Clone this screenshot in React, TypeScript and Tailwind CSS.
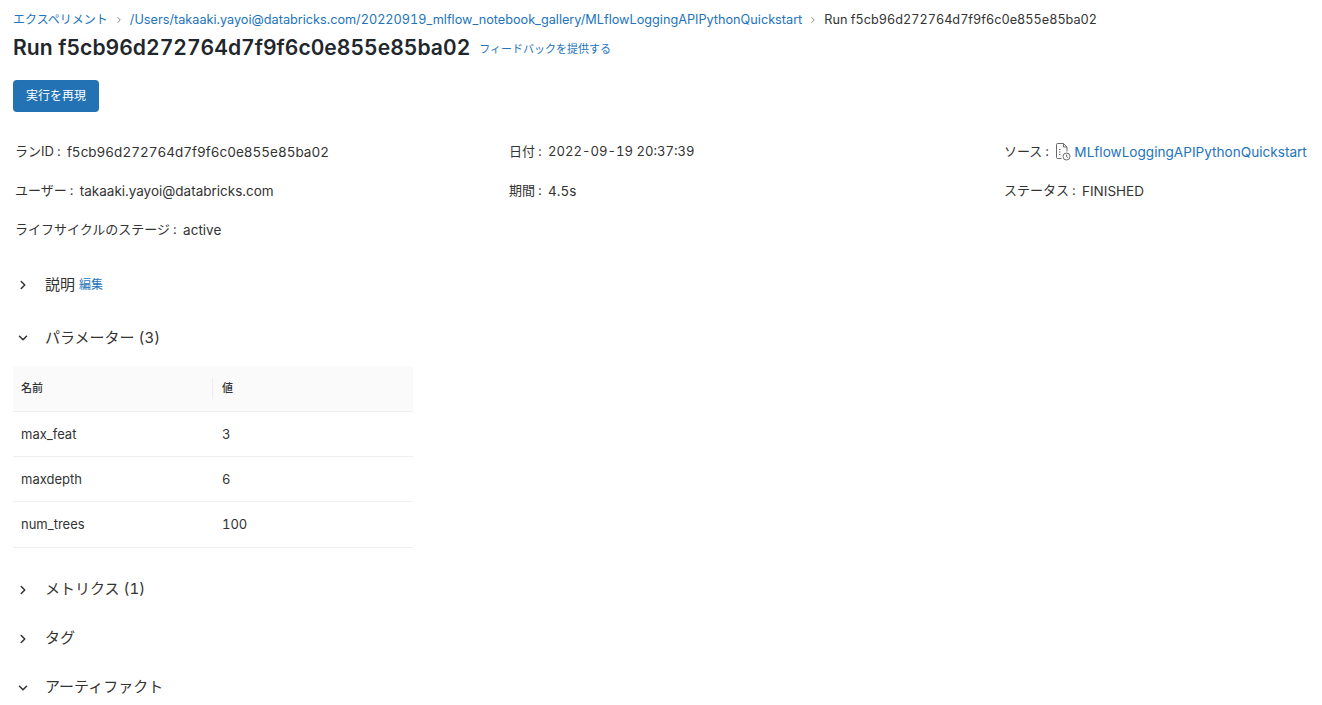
import { ChevronDown, ChevronRight } from 'lucide-react';

const FONT = "font-['Inter','Noto_Sans_CJK_JP',sans-serif]";

const params = [
  { name: 'max_feat', value: '3' },
  { name: 'maxdepth', value: '6' },
  { name: 'num_trees', value: '100' },
];

function NotebookIcon() {
  return (
    <svg width="17" height="20" viewBox="0 0 17 20" fill="none" stroke="#6b6b6b" strokeWidth="1" className="mr-[2px] shrink-0">
      <path d="M6.5 16.5H2.5a1 1 0 0 1-1-1V2.5a1 1 0 0 1 1-1h6l3.5 3.5v4.5" />
      <path d="M8.5 1.5V5H12" />
      <path d="M4 7.5h1.5M4 10h1.5M4 12.5h1.5" />
      <circle cx="11.5" cy="14.5" r="3.5" />
      <path d="M11.5 12.5v2.2l1.4.8" />
    </svg>
  );
}

function Section({ open, title, children, className }: { open?: boolean; title: string; children?: React.ReactNode; className?: string }) {
  return (
    <div className={`flex items-center h-[24px] text-[15px] text-[#333333] tabular-nums ${className ?? ''}`}>
      <span className="w-[32px] pl-[16px] shrink-0">
        {open ? (
          <ChevronDown size={14} strokeWidth={2.6} color="#333333" />
        ) : (
          <ChevronRight size={14} strokeWidth={2.6} color="#333333" />
        )}
      </span>
      <span className="ml-[13px]">{title}</span>
      {children}
    </div>
  );
}

function Info({ label, children }: { label: string; children: React.ReactNode }) {
  return (
    <div className="flex items-center h-[20px] text-[13px] text-[#333333] whitespace-nowrap">
      <span>{label}</span>
      <span className="w-[13px] pl-[3px]">:</span>
      <span className="flex items-center text-[13.5px] tabular-nums">{children}</span>
    </div>
  );
}

export default function App() {
  return (
    <div className={`${FONT} w-[1322px] h-[705px] overflow-hidden bg-white pt-[10px]`}>
      {/* Breadcrumb */}
      <div className="flex items-center h-[20px] pl-[13px] text-[12.7px] whitespace-nowrap tabular-nums">
        <a className="text-[12px] text-[#2374bb]">エクスペリメント</a>
        <ChevronRight size={10} className="mx-[6px] text-[#6b6b6b]" />
        <a className="text-[#2374bb]">/Users/takaaki.yayoi@databricks.com/20220919_mlflow_notebook_gallery/MLflowLoggingAPIPythonQuickstart</a>
        <ChevronRight size={10} className="mx-[6px] text-[#6b6b6b]" />
        <span className="text-[#333333]">Run f5cb96d272764d7f9f6c0e855e85ba02</span>
      </div>

      {/* Title */}
      <div className="flex items-center h-[36px] pl-[13px] whitespace-nowrap">
        <h1 className="text-[21.1px] font-semibold text-[#1f272d] tabular-nums">Run f5cb96d272764d7f9f6c0e855e85ba02</h1>
        <a className="ml-[9px] mt-[3px] text-[11px] text-[#2374bb]">フィードバックを提供する</a>
      </div>

      <button className="block ml-[13px] mt-[14px] h-[32px] w-[86px] rounded-[4px] bg-[#2272b4] text-white text-[12px]">実行を再現</button>

      {/* Run info */}
      <div className="grid grid-cols-[494px_495px_1fr] pl-[15px] gap-y-[19px] mt-[30px]">
        <Info label="ランID">f5cb96d272764d7f9f6c0e855e85ba02</Info>
        <Info label="日付"><span className="text-[13.1px]">2022-09-19 20:37:39</span></Info>
        <Info label="ソース">
          <NotebookIcon />
          <a className="text-[13.6px] text-[#2374bb]">MLflowLoggingAPIPythonQuickstart</a>
        </Info>
        <Info label="ユーザー">takaaki.yayoi@databricks.com</Info>
        <Info label="期間">4.5s</Info>
        <Info label="ステータス">FINISHED</Info>
        <Info label="ライフサイクルのステージ">active</Info>
      </div>

      <Section title="説明" className="mt-[33px]">
        <a className="ml-[4px] text-[12px] text-[#2374bb]">編集</a>
      </Section>
      <Section open title="パラメーター (3)" className="mt-[29px]" />

      {/* Parameter table */}
      <table className="ml-[13px] mt-[16px] w-[400px] table-fixed text-[13px] text-[#333333] border-collapse tabular-nums">
        <thead>
          <tr className="h-[45px] bg-[#fafafa] border-b border-[#f0f0f0] text-[11px] text-left">
            <th className="w-[200px] pl-[8px] font-medium">
              <div className="flex items-center justify-between h-[22px]">
                名前
                <span className="w-px h-[21px] bg-[#ededed]" />
              </div>
            </th>
            <th className="pl-[9px] font-medium">値</th>
          </tr>
        </thead>
        <tbody>
          {params.map((p) => (
            <tr key={p.name} className="h-[45px] last:h-[46px] border-b border-[#f0f0f0]">
              <td className="pl-[8px] pt-[2px]">{p.name}</td>
              <td className="pl-[9px] pt-[2px]">{p.value}</td>
            </tr>
          ))}
        </tbody>
      </table>

      <Section title="メトリクス (1)" className="mt-[30px]" />
      <Section title="タグ" className="mt-[25px]" />
      <Section open title="アーティファクト" className="mt-[25px]" />
    </div>
  );
}
